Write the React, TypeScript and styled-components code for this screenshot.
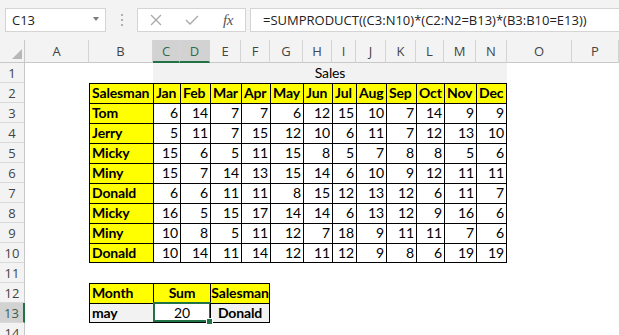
import React from 'react';
import styled, { createGlobalStyle, css } from 'styled-components';

const GlobalStyle = createGlobalStyle`
  html, body { margin: 0; padding: 0; background: #ffffff; }
  body { width: 619px; height: 335px; overflow: hidden; font-family: "Open Sans", sans-serif; }
`;

const Window = styled.div`
  width: 619px;
  height: 335px;
  overflow: hidden;
  display: flex;
  flex-direction: column;
  background: #ffffff;
`;

const FormulaBar = styled.div`
  flex: none;
  height: 40px;
  box-sizing: border-box;
  background: #f3f3f3;
  display: flex;
  align-items: center;
  padding-left: 5px;
`;

const NameBox = styled.div`
  width: 101px;
  height: 24px;
  box-sizing: border-box;
  background: #ffffff;
  border: 1px solid #d4d4d4;
  display: flex;
  align-items: center;
  justify-content: space-between;
  padding: 0 6px 0 6px;
  font-family: "Open Sans", sans-serif;
  font-size: 13px;
  color: #222;
`;

const DropArrow = styled.span`
  width: 0;
  height: 0;
  border-left: 3.5px solid transparent;
  border-right: 3.5px solid transparent;
  border-top: 4px solid #7a7a7a;
  margin-bottom: 2px;
`;

const Grip = styled.div`
  width: 31px;
  height: 24px;
  display: flex;
  flex-direction: column;
  align-items: center;
  justify-content: center;
  gap: 3px;
`;

const GripDot = styled.span`
  width: 2px;
  height: 2px;
  background: #b0b0b0;
`;

const IconBox = styled.div`
  width: 109px;
  height: 24px;
  box-sizing: border-box;
  background: #ffffff;
  border: 1px solid #d4d4d4;
  display: flex;
  align-items: center;
  padding-left: 12px;
`;

const IconSlot = styled.span<{ $w: number }>`
  width: ${(p) => p.$w}px;
  display: flex;
  align-items: center;
  justify-content: center;
`;

const Fx = styled.span`
  font-family: "Liberation Serif", serif;
  font-style: italic;
  font-size: 15px;
  color: #555;
  letter-spacing: -0.5px;
  line-height: 1;
`;

const FormulaInput = styled.div`
  flex: 1;
  height: 24px;
  margin-left: 4px;
  box-sizing: border-box;
  background: #ffffff;
  border: 1px solid #d4d4d4;
  border-right: none;
  display: flex;
  align-items: center;
  padding-left: 12px;
  font-family: "Open Sans", sans-serif;
  font-size: 13px;
  color: #222;
  white-space: nowrap;
`;

const Sheet = styled.div`
  display: grid;
  grid-template-columns: 25px 64px 64px 27px 30px 31px 29px 33px 29px 24px 30px 30px 28px 32px 31px 65px 1fr;
  grid-template-rows: 23px;
  grid-auto-rows: 20px;
  font-family: "Lato", sans-serif;
  font-size: 14px;
  letter-spacing: -0.15px;
`;

const Corner = styled.div`
  background: #f3f3f3;
  border-right: 1px solid #c8c8c8;
  border-bottom: 1px solid #c8c8c8;
  box-sizing: border-box;
  display: flex;
  align-items: flex-end;
  justify-content: flex-end;
  padding: 0 2px 3px 0;
`;

const ColHead = styled.div<{ $selected?: boolean }>`
  box-sizing: border-box;
  background: ${(p) => (p.$selected ? '#d2d2d2' : '#f3f3f3')};
  border-right: 1px solid #d4d4d4;
  border-bottom: ${(p) => (p.$selected ? '2px solid #217346' : '1px solid #c8c8c8')};
  color: ${(p) => (p.$selected ? '#2f6b4a' : '#444444')};
  font-family: "Open Sans", sans-serif;
  font-size: 13px;
  letter-spacing: 0;
  display: flex;
  align-items: center;
  justify-content: center;
  padding-top: ${(p) => (p.$selected ? '1px' : '0')};
`;

const RowHead = styled.div<{ $selected?: boolean }>`
  box-sizing: border-box;
  background: ${(p) => (p.$selected ? '#d2d2d2' : '#f3f3f3')};
  border-bottom: 1px solid #d9d9d9;
  border-right: ${(p) => (p.$selected ? '2px solid #217346' : '1px solid #c8c8c8')};
  color: ${(p) => (p.$selected ? '#3d5e4b' : '#444444')};
  font-family: "Open Sans", sans-serif;
  font-size: 13px;
  letter-spacing: 0;
  display: flex;
  align-items: center;
  justify-content: center;
`;

type Fill = 'yellow' | 'gray';
type Align = 'left' | 'right' | 'center';

const fills: Record<Fill, string> = { yellow: '#ffff00', gray: '#f2f2f2' };

const Cell = styled.div<{
  $span: number;
  $fill?: Fill;
  $bold?: boolean;
  $align: Align;
  $bt?: boolean;
  $bl?: boolean;
  $br?: boolean;
  $bb?: boolean;
  $selected?: boolean;
}>`
  grid-column: span ${(p) => p.$span};
  box-sizing: border-box;
  position: relative;
  background: ${(p) => (p.$fill ? fills[p.$fill] : '#ffffff')};
  font-weight: ${(p) => (p.$bold ? 700 : 400)};
  text-align: ${(p) => p.$align};
  color: #000000;
  white-space: nowrap;
  line-height: 18px;
  padding: ${(p) => (p.$align === 'center' ? '0' : '0 2px')};
  border-top: ${(p) => (p.$bt ? '1px solid #000' : '1px solid transparent')};
  border-left: ${(p) => (p.$bl ? '1px solid #000' : 'none')};
  border-right: ${(p) => (p.$br ? '1px solid #000' : 'none')};
  border-bottom: ${(p) => (p.$bb ? '1px solid #000' : 'none')};
  ${(p) =>
    p.$selected &&
    css`
      &::after {
        content: '';
        position: absolute;
        top: -2px;
        left: -1px;
        right: -1px;
        bottom: 0;
        border: 2px solid #217346;
      }
      &::before {
        content: '';
        position: absolute;
        right: -3px;
        bottom: -3px;
        width: 5px;
        height: 5px;
        background: #217346;
        border: 1px solid #ffffff;
        z-index: 2;
      }
    `}
`;

type Spec = {
  text?: string | number;
  span?: number;
  fill?: Fill;
  bold?: boolean;
  align?: Align;
  t?: boolean;
  l?: boolean;
  r?: boolean;
  b?: boolean;
  selected?: boolean;
};

const COLS = ['A', 'B', 'C', 'D', 'E', 'F', 'G', 'H', 'I', 'J', 'K', 'L', 'M', 'N', 'O', 'P'];
const MONTHS = ['Jan', 'Feb', 'Mar', 'Apr', 'May', 'Jun', 'Jul', 'Aug', 'Sep', 'Oct', 'Nov', 'Dec'];
const SALES: [string, number[]][] = [
  ['Tom', [6, 14, 7, 7, 6, 12, 15, 10, 7, 14, 9, 9]],
  ['Jerry', [5, 11, 7, 15, 12, 10, 6, 11, 7, 12, 13, 10]],
  ['Micky', [15, 6, 5, 11, 15, 8, 5, 7, 8, 8, 5, 6]],
  ['Miny', [15, 7, 14, 13, 15, 14, 6, 10, 9, 12, 11, 11]],
  ['Donald', [6, 6, 11, 11, 8, 15, 12, 13, 12, 6, 11, 7]],
  ['Micky', [16, 5, 15, 17, 14, 14, 6, 13, 12, 9, 16, 6]],
  ['Miny', [10, 8, 5, 11, 12, 7, 18, 9, 11, 11, 7, 6]],
  ['Donald', [10, 14, 11, 14, 12, 11, 12, 9, 8, 6, 19, 19]],
];

const empty = (n: number): Spec[] => Array.from({ length: n }, () => ({}));

const rows: Spec[][] = [
  [{}, {}, { text: 'Sales', span: 12, fill: 'gray', align: 'center' }, {}, {}],
  [
    {},
    { text: 'Salesman', fill: 'yellow', bold: true, t: true, l: true },
    ...MONTHS.map((m, i) => ({ text: m, fill: 'yellow' as Fill, bold: true, t: true, l: true, r: i === 11 })),
    {},
    {},
  ],
  ...SALES.map(([name, vals], ri) => {
    const last = ri === SALES.length - 1;
    return [
      {},
      { text: name, fill: 'yellow' as Fill, bold: true, t: true, l: true, b: last },
      ...vals.map((v, i) => ({ text: v, align: 'right' as Align, t: true, l: true, b: last, r: i === 11 })),
      {},
      {},
    ];
  }),
  empty(16),
  [
    {},
    { text: 'Month', fill: 'yellow', bold: true, t: true, l: true },
    { text: 'Sum', span: 2, fill: 'yellow', bold: true, align: 'center', t: true, l: true },
    { text: 'Salesman', span: 2, fill: 'yellow', bold: true, align: 'center', t: true, l: true, r: true },
    ...empty(10),
  ],
  [
    {},
    { text: 'may', fill: 'gray', bold: true, t: true, l: true, b: true },
    { text: 20, span: 2, align: 'center', t: true, l: true, b: true, selected: true },
    { text: 'Donald', span: 2, fill: 'gray', bold: true, align: 'center', t: true, l: true, r: true, b: true },
    ...empty(10),
  ],
  empty(16),
];

const CrossIcon = () => (
  <svg width="12" height="12" viewBox="0 0 12 12">
    <path d="M1 1 L11 11 M11 1 L1 11" stroke="#a8a8a8" strokeWidth="1.3" fill="none" />
  </svg>
);

const CheckIcon = () => (
  <svg width="14" height="10" viewBox="0 0 14 10">
    <path d="M1 5 L5 9 L13 1" stroke="#a8a8a8" strokeWidth="1.3" fill="none" />
  </svg>
);

const CornerTriangle = () => (
  <svg width="10" height="10" viewBox="0 0 10 10">
    <polygon points="10,0 10,10 0,10" fill="#b7b7b7" />
  </svg>
);

export default function App() {
  return (
    <Window>
      <GlobalStyle />
      <FormulaBar>
        <NameBox>
          <span>C13</span>
          <DropArrow />
        </NameBox>
        <Grip>
          <GripDot />
          <GripDot />
          <GripDot />
        </Grip>
        <IconBox>
          <IconSlot $w={12}>
            <CrossIcon />
          </IconSlot>
          <IconSlot $w={60}>
            <CheckIcon />
          </IconSlot>
          <IconSlot $w={12}>
            <Fx>fx</Fx>
          </IconSlot>
        </IconBox>
        <FormulaInput>=SUMPRODUCT((C3:N10)*(C2:N2=B13)*(B3:B10=E13))</FormulaInput>
      </FormulaBar>
      <Sheet>
        <Corner>
          <CornerTriangle />
        </Corner>
        {COLS.map((c) => (
          <ColHead key={c} $selected={c === 'C' || c === 'D'}>
            {c}
          </ColHead>
        ))}
        {rows.map((row, ri) => (
          <React.Fragment key={ri}>
            <RowHead $selected={ri + 1 === 13}>{ri + 1}</RowHead>
            {row.map((s, ci) => (
              <Cell
                key={ci}
                $span={s.span ?? 1}
                $fill={s.fill}
                $bold={s.bold}
                $align={s.align ?? 'left'}
                $bt={s.t}
                $bl={s.l}
                $br={s.r}
                $bb={s.b}
                $selected={s.selected}
              >
                {s.text}
              </Cell>
            ))}
          </React.Fragment>
        ))}
      </Sheet>
    </Window>
  );
}
